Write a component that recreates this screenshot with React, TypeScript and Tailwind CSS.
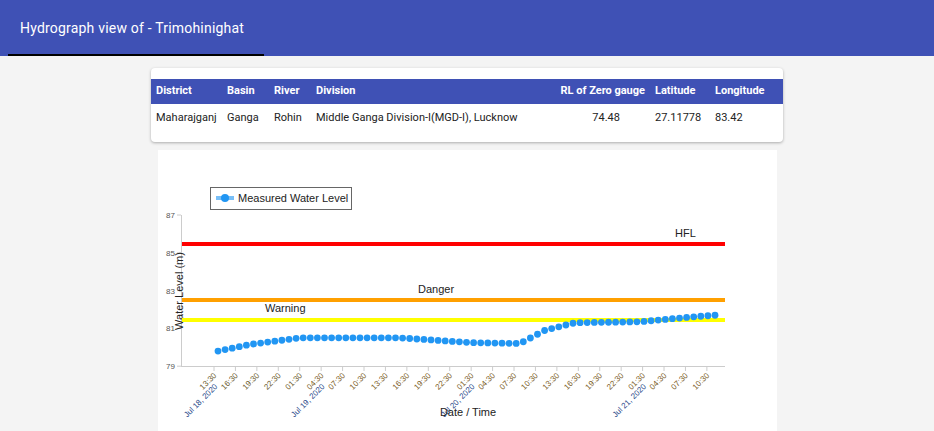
import React from "react";

const ticks = ["13:30","16:30","19:30","22:30","01:30","04:30","07:30","10:30","13:30","16:30","19:30","22:30","01:30","04:30","07:30","10:30","13:30","16:30","19:30","22:30","01:30","04:30","07:30","10:30"];
const dates: Record<number,string> = {0:"Jul 18, 2020",5:"Jul 19, 2020",12:"Jul 20, 2020",20:"Jul 21, 2020"};
const Y = (v: number) => 215 + (87 - v) * 18.9;
const knots: [number, number][] = [[218,79.8],[250,80.15],[300,80.5],[400,80.5],[470,80.25],[520,80.2],[545,80.9],[575,81.3],[640,81.35],[690,81.6],[716,81.7]];
function val(x: number) {
  for (let i = 0; i < knots.length - 1; i++) {
    const [x0, v0] = knots[i], [x1, v1] = knots[i + 1];
    if (x <= x1) return v0 + ((x - x0) / (x1 - x0)) * (v1 - v0);
  }
  return 81.7;
}
const pts = Array.from({ length: 71 }, (_, i) => 218 + i * 7.1);

export default function App() {
  return (
    <div className="w-[934px] h-[431px] bg-[#f4f4f4] overflow-hidden" style={{ fontFamily: "Arial, 'Liberation Sans', sans-serif" }}>
      <div className="h-[56px] bg-[#3f51b5] relative flex items-center px-[20px]">
        <span className="text-white text-[14px] tracking-[0.2px]" style={{ fontFamily: "Roboto, sans-serif" }}>Hydrograph view of - Trimohinighat</span>
        <div className="absolute left-[8px] bottom-0 w-[256px] h-[2px] bg-black" />
      </div>
      <div className="ml-[151px] mt-[12px] w-[632px] h-[74px] bg-white rounded shadow-[0_1px_3px_rgba(0,0,0,0.3)] pt-[11px]" style={{ fontFamily: "Roboto, sans-serif" }}>
        <div className="h-[25px] bg-[#3f51b5] text-white text-[11px] font-bold flex items-center">
          <span className="w-[76px] pl-[5px]">District</span>
          <span className="w-[47px]">Basin</span>
          <span className="w-[42px]">River</span>
          <span className="w-[230px]">Division</span>
          <span className="w-[109px] text-right pr-[10px]">RL of Zero gauge</span>
          <span className="w-[60px]">Latitude</span>
          <span>Longitude</span>
        </div>
        <div className="h-[28px] text-[11px] text-[#222] flex items-center">
          <span className="w-[76px] pl-[5px]">Maharajganj</span>
          <span className="w-[47px]">Ganga</span>
          <span className="w-[42px]">Rohin</span>
          <span className="w-[230px]">Middle Ganga Division-I(MGD-I), Lucknow</span>
          <span className="w-[109px] text-right pr-[35px]">74.48</span>
          <span className="w-[60px]">27.11778</span>
          <span>83.42</span>
        </div>
      </div>
      <div className="ml-[158px] mt-[8px] w-[619px] h-[281px] bg-white">
        <svg width="619" height="281" viewBox="158 150 619 281">
          <rect x="210.5" y="187.5" width="141" height="22" fill="white" stroke="#666" />
          <line x1="216" y1="198" x2="234" y2="198" stroke="#2196f3" strokeWidth="4" opacity="0.6" />
          <circle cx="225" cy="198" r="4" fill="#2196f3" />
          <text x="238" y="202" fontSize="11" fill="#222">Measured Water Level</text>
          <line x1="181.5" y1="215" x2="181.5" y2="366" stroke="#ccc" />
          <line x1="181" y1="366.5" x2="725" y2="366.5" stroke="#ccc" />
          {[87,85,83,81,79].map(v => (
            <g key={v}>
              <line x1="177" x2="181" y1={Y(v)} y2={Y(v)} stroke="#ccc" />
              <text x="175" y={Y(v) + 3} fontSize="8" fill="#555" textAnchor="end">{v}</text>
            </g>
          ))}
          <text transform="translate(183 291) rotate(-90)" fontSize="11" textAnchor="middle" fill="#222">Water Level (m)</text>
          <line x1="182" x2="725" y1="244" y2="244" stroke="#ff0000" strokeWidth="4" />
          <line x1="182" x2="725" y1="300" y2="300" stroke="#ffa000" strokeWidth="4" />
          <line x1="182" x2="725" y1="320" y2="320" stroke="#ffff00" strokeWidth="4" />
          <text x="675" y="237" fontSize="11" fill="#222">HFL</text>
          <text x="418" y="293" fontSize="11" fill="#222">Danger</text>
          <text x="265" y="312" fontSize="11" fill="#222">Warning</text>
          {pts.map((x, i) => <circle key={i} cx={x} cy={Y(val(x))} r="3.4" fill="#2196f3" />)}
          {ticks.map((t, i) => {
            const x = 214 + i * 21.43;
            const c = i < 5 ? "#6b5b2e" : i < 12 ? "#7a5c1e" : "#7a5c1e";
            return (
              <g key={i}>
                <line x1={x} x2={x} y1="366" y2="371" stroke="#ccc" />
                <text transform={`translate(${x + 3} 376) rotate(-45)`} fontSize="8" fill={c} textAnchor="end">{t}</text>
                {dates[i] && <text transform={`translate(${x + 4} 387) rotate(-45)`} fontSize="8" fill="#2a4a8a" textAnchor="end">{dates[i]}</text>}
              </g>
            );
          })}
          <text x="468" y="416" fontSize="11" fill="#222" textAnchor="middle">Date / Time</text>
        </svg>
      </div>
    </div>
  );
}
